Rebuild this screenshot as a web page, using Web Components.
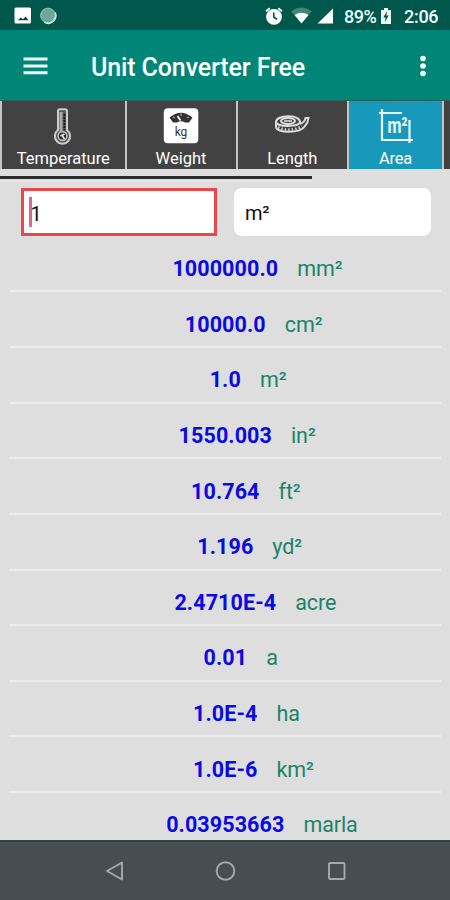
<!DOCTYPE html>
<html lang="en">
<head>
<meta charset="utf-8">
<title>Unit Converter Free</title>
<style>
html,body{margin:0;padding:0;background:#dedede}
body{width:450px;height:900px;overflow:hidden;font-family:Roboto,"Liberation Sans",sans-serif}
</style>
</head>
<body>
<converter-app></converter-app>
<script>
function define(name, html) {
  const t = document.createElement('template');
  t.innerHTML = html;
  customElements.define(name, class extends HTMLElement {
    constructor() {
      super();
      this.attachShadow({mode: 'open'}).appendChild(t.content.cloneNode(true));
    }
  });
}

define('status-bar', `
<style>
:host{display:flex;align-items:center;height:30px;box-sizing:border-box;background:#00574b;color:#f4fffc;font-size:18px;font-weight:500;padding:2px 12px 0 14px}
svg{display:block;flex:none}
.sp{flex:1}
span{line-height:28px;white-space:nowrap;padding-top:1px}
</style>
<svg width="44" height="18" viewBox="0 0 44 18">
<rect x=".5" y=".5" width="16.5" height="16" rx="1.5" fill="#fff"/>
<path d="M4 13.200l2.800-2.600 2.200 1.600 2.600-2.600 3 3.600z" fill="#00473d"/>
<circle cx="34" cy="8.500" r="7.600" fill="#6da79b"/><path d="M41 5.500a7.600 7.600 0 0 1-10.500 9.800" fill="none" stroke="#e8f6f2" stroke-width="1.800"/><circle cx="34" cy="8.500" r="7.400" fill="none" stroke="#a1c9c0" stroke-width=".8"/>
</svg>
<div class="sp"></div>
<svg width="18" height="18" viewBox="0 0 18 18" style="margin-right:8px"><circle cx="9" cy="9.800" r="6.400" fill="none" stroke="#fff" stroke-width="3"/><circle cx="9" cy="9.800" r="6" fill="#fff"/><path d="M1 4.300L4.800 1.200M17 4.300L13.200 1.200" stroke="#fff" stroke-width="2"/><path d="M8.800 5.600v4.600l3.300 2" fill="none" stroke="#00574b" stroke-width="1.600"/></svg>
<svg width="21" height="18" viewBox="0 0 21 18" style="margin-right:5px"><path d="M10.500 16.500L.3 4.600Q10.500-3.500 20.700 4.600z" fill="#458579"/><path d="M10.500 16.500L3.600 8Q10.500 3.500 17.400 8z" fill="#fff"/></svg>
<svg width="17" height="18" viewBox="0 0 17 18" style="margin-right:10.500px"><path d="M.5 16.500L16 1.500v15z" fill="#fff"/></svg>
<span style="width:34px;letter-spacing:-.5px">89%</span>
<svg width="12" height="18" viewBox="0 0 12 18" style="margin:0 12px 0 2px"><path d="M1 3h3V1h4v2h3v14H1z" fill="#eef8f5"/><path d="M7 4L3.300 10.500h2.200L4.800 15l4-6.500H6.400z" fill="#00574b"/></svg>
<span style="width:34px;letter-spacing:-.3px">2:06</span>`);

define('app-bar', `
<style>
:host{display:flex;align-items:center;height:70px;box-sizing:border-box;background:#008577;color:#fff;padding:4px 20px 0 23px}
h1{margin:0 0 0 43px;padding-top:2px;flex:1;font-size:25px;font-weight:500;line-height:40px;white-space:nowrap;letter-spacing:-.12px}
svg{display:block;flex:none}
.m{margin-top:-3px}
</style>
<svg class="m" width="25" height="22" viewBox="0 0 25 22"><path d="M.5 4h24M.5 11h24M.5 17.800h24" stroke="#effaf8" stroke-width="3"/></svg>
<h1><slot></slot></h1>
<svg class="m" width="14" height="24" viewBox="0 0 14 24"><g fill="#fff"><circle cx="7" cy="4.500" r="2.800"/><circle cx="7" cy="12" r="2.800"/><circle cx="7" cy="19.500" r="2.800"/></g></svg>`);

define('unit-tab', `
<style>
:host{display:flex;flex-direction:column;align-items:center;box-sizing:border-box;flex:none;height:69px;background:#424242;color:#fff;border-bottom:1px solid #222;padding-top:7px}
:host([active]){background:#1898ba;border-bottom-color:#1898ba}
.i{height:41px;display:flex}
.l{font-size:16.500px;line-height:20px;white-space:nowrap;letter-spacing:var(--ls,0)}
::slotted(svg){display:block}
</style>
<div class="i"><slot name="icon"></slot></div><div class="l"><slot></slot></div>`);

define('tab-strip', `
<style>
:host{display:flex;gap:2px;height:69px;background:#c4c4c4;padding-left:2px;border-top:1px solid #2d6059;box-sizing:border-box;overflow:hidden}
text{font-family:Roboto,"Liberation Sans",sans-serif}
</style>
<unit-tab style="width:122.500px;--ls:0px"><svg slot="icon" width="26" height="38" viewBox="0 0 26 38"><path d="M8 22V3Q8 1.200 10 1.200H15Q17 1.200 17 3V22a7.600 7.600 0 1 1-9 0z" fill="#555" stroke="#ccc" stroke-width="2"/><circle cx="12.500" cy="28" r="4.400" fill="#292929" stroke="#bbb" stroke-width="1.600"/><path d="M11 4v20" stroke="#aaa" stroke-width="3"/><path d="M14.500 6v16" stroke="#222" stroke-width="2" stroke-dasharray="2 1"/><path d="M10.500 28l4-2M12.500 28l2 3" stroke="#eee" stroke-width="1.500"/></svg>Temperature</unit-tab>
<unit-tab style="width:109px"><svg slot="icon" width="36" height="38" viewBox="0 0 36 38"><rect x=".8" y=".3" width="34.500" height="35" rx="4" fill="#fff"/><path d="M6.500 9.500Q18 0 29.500 9.500l-3.500 5H22q-4-2.500-8 0h-4z" fill="#333"/><path d="M17.500 12.500L14.500 8" stroke="#fff" stroke-width="1.800"/><path d="M10 9l2 1M18 5.500v2.500M26 9l-2 1" stroke="#aaa" stroke-width="1.200"/><text x="18" y="28" text-anchor="middle" font-size="12" fill="#333">kg</text></svg>Weight</unit-tab>
<unit-tab style="width:109.500px;--ls:-.1px"><svg slot="icon" width="36" height="38" viewBox="0 0 36 38"><g transform="translate(0 1)"><g fill="none" stroke="#ddd" stroke-width="2"><path d="M2 13C2 5.500 26 5 26 13c0 5-24 5.500-24 0v5c0 6 24 7 29-1 2-2 3-4 3.500-8h-3q-.5 4-5.500 6"/><ellipse cx="14" cy="12" rx="7" ry="3"/></g><path d="M10 12h8" stroke="#bbb" stroke-width="2"/><path d="M4 18.500q12 5 24-1" fill="none" stroke="#ccc" stroke-width="3" stroke-dasharray="1.500 2"/></g></svg>Length</unit-tab>
<unit-tab active style="width:93px;--ls:-.2px"><svg slot="icon" width="36" height="38" viewBox="0 0 36 38"><path d="M1 5h23M4 1v31h31M31.500 12v23" fill="none" stroke="#e9fbff" stroke-width="2.200"/><text x="9.500" y="25" font-size="22" font-weight="700" fill="#f0fcff" textLength="20" lengthAdjust="spacingAndGlyphs">m²</text></svg>Area</unit-tab>
<unit-tab style="width:8px"></unit-tab>`);

define('scroll-mark', `
<style>
:host{display:block;height:19px;box-sizing:border-box;padding-top:7px;background:#dedede}
i{display:block;width:312px;height:3px;background:#2b2b2b;margin-bottom:2px}
b{display:block;width:312px;height:1px;background:#e8e8e8}
</style><i></i><b></b>`);

define('entry-row', `
<style>
:host{display:flex;gap:17px;height:48px;padding:0 19px 0 21px}
div{box-sizing:border-box;display:flex;align-items:center;background:#fff;color:#111;font-size:20px}
.v{width:196px;border:3px solid #e94848;padding-left:5px}
.v span{padding-top:3px;margin-left:-1px}
.u{width:197px;border-radius:8px;padding:1px 0 0 11px;letter-spacing:-.3px}
i{width:2.500px;height:30px;background:#df6688}
</style>
<div class="v"><i></i><span>1</span></div><div class="u">m²</div>`);

define('result-row', `
<style>
:host{display:grid;grid-template-columns:1fr auto 1fr;column-gap:19px;height:55.630px;box-sizing:border-box;margin:0 9px;border-bottom:2px solid #ececec;align-items:center;font-size:21.500px;line-height:30px;padding-top:11px;white-space:nowrap}
.v{grid-column:2;color:#0a0ae4;font-weight:700;letter-spacing:.1px;margin:0 -.3px 0 .3px}
.u{color:#1a8468;letter-spacing:-.1px;margin-left:.3px}
</style>
<span class="v"><slot name="value"></slot></span><span class="u"><slot></slot></span>`);

define('nav-bar', `
<style>
:host{display:flex;align-items:center;justify-content:space-between;height:60px;flex:none;background:#464e52;border-top:2px solid #333f41;box-sizing:border-box;padding:0 103px 1px 104px}
svg{display:block}
path,circle,rect{fill:none;stroke:#a3aaac;stroke-width:1.900}
</style>
<svg width="20" height="22" viewBox="0 0 20 22"><path d="M18 2.500v17L3 11z" stroke-linejoin="round"/></svg>
<svg width="22" height="22" viewBox="0 0 22 22"><circle cx="10.500" cy="11" r="8.800"/></svg>
<svg width="20" height="22" viewBox="0 0 20 22"><rect x="2" y="3" width="15.500" height="16" rx="1"/></svg>`);

define('converter-app', `
<style>
:host{display:flex;flex-direction:column;width:450px;height:900px;overflow:hidden;background:#dedede}
main{flex:1;min-height:0;overflow:hidden;padding-top:.8px}
</style>
<status-bar></status-bar>
<app-bar>Unit Converter Free</app-bar>
<tab-strip></tab-strip>
<scroll-mark></scroll-mark>
<entry-row></entry-row>
<main>
<result-row><span slot="value">1000000.0</span>mm²</result-row>
<result-row><span slot="value">10000.0</span>cm²</result-row>
<result-row><span slot="value">1.0</span>m²</result-row>
<result-row><span slot="value">1550.003</span>in²</result-row>
<result-row><span slot="value">10.764</span>ft²</result-row>
<result-row><span slot="value">1.196</span>yd²</result-row>
<result-row><span slot="value">2.4710E-4</span>acre</result-row>
<result-row><span slot="value">0.01</span>a</result-row>
<result-row><span slot="value">1.0E-4</span>ha</result-row>
<result-row><span slot="value">1.0E-6</span>km²</result-row>
<result-row><span slot="value">0.03953663</span>marla</result-row>
</main>
<nav-bar></nav-bar>`);
</script>
</body>
</html>
